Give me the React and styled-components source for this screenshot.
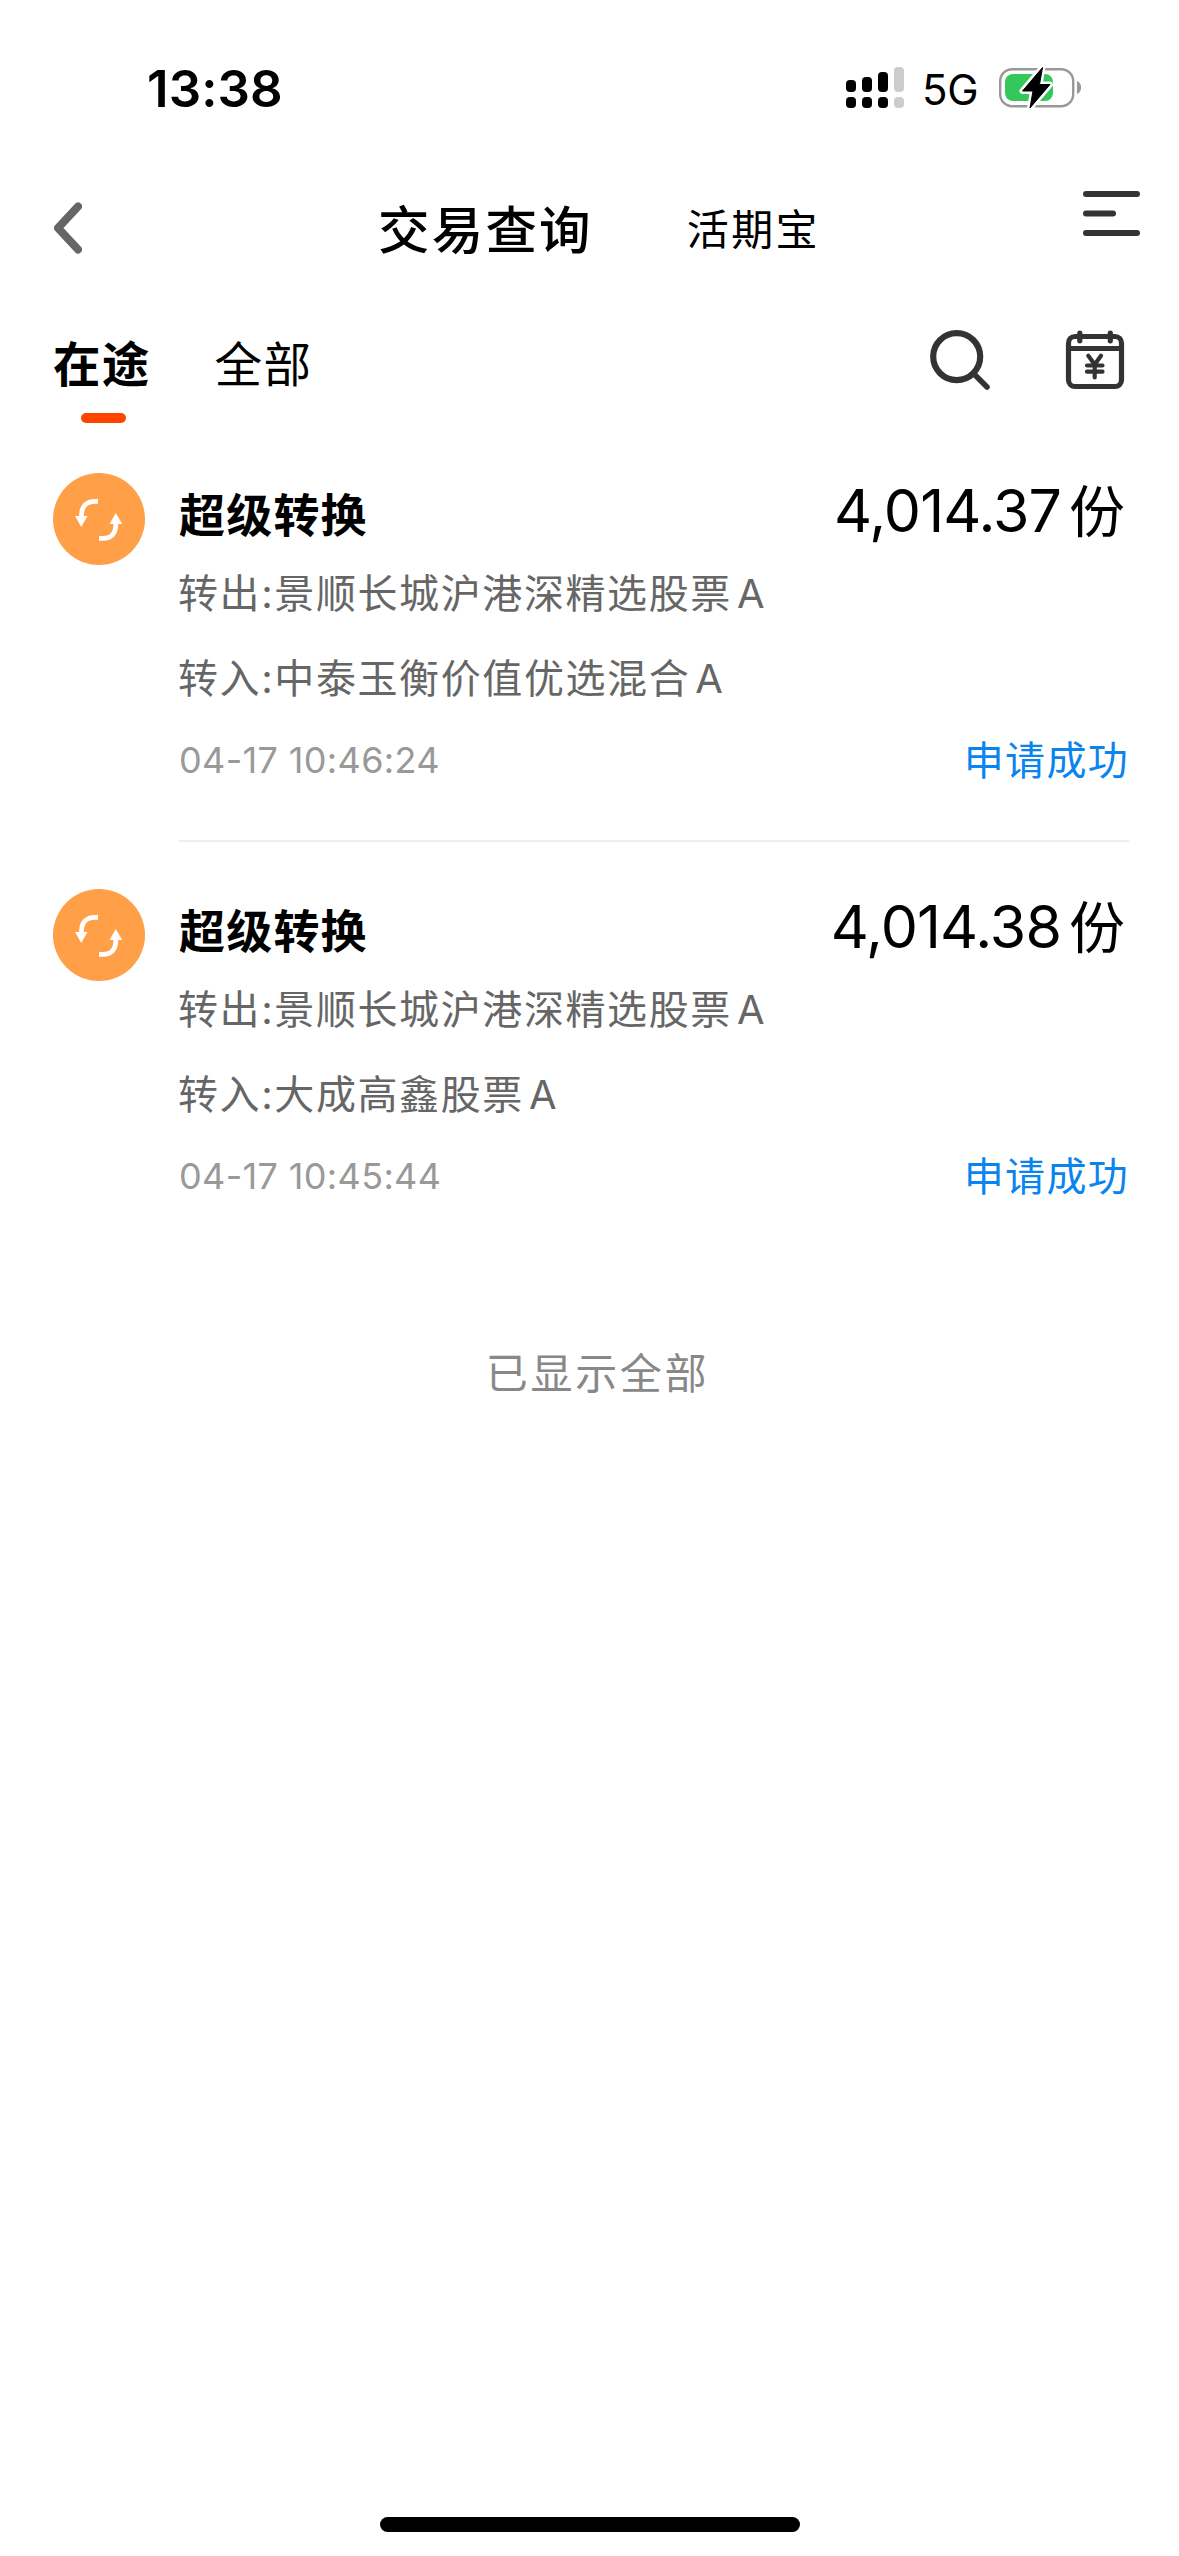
import React from "react";
import styled, { createGlobalStyle } from "styled-components";

const GlobalStyle = createGlobalStyle`
  *, *::before, *::after { box-sizing: border-box; }
  html, body { margin: 0; padding: 0; background: #fff; }
  body { font-family: Inter, "Noto Sans CJK SC", sans-serif; color: #000; }
  button { margin: 0; padding: 0; border: 0; background: none; font: inherit; color: inherit; }
  h1, p { margin: 0; font: inherit; }
  svg { display: block; flex: none; }
`;

const Screen = styled.div`
  width: 1179px;
  height: 2556px;
  display: flex;
  flex-direction: column;
  background: #fff;
  overflow: hidden;
  white-space: nowrap;
`;

const StatusBar = styled.header`
  height: 176px;
  padding: 0 98px 0 147px;
  display: flex;
  align-items: center;
  justify-content: space-between;
`;

const Clock = styled.time`
  padding-top: 1px;
  font-size: 51px;
  font-weight: 600;
  line-height: 60px;
  letter-spacing: 0.1px;
`;

const Indicators = styled.div`
  display: flex;
  align-items: center;
`;

const Network = styled.span`
  margin: 3px 20px 0 18px;
  width: 57px;
  font-size: 42px;
  line-height: 50px;
  letter-spacing: -0.4px;
`;

const NavBar = styled.nav`
  height: 104px;
  padding: 0 39px 0 54px;
  display: flex;
  align-items: center;
`;

const NavButton = styled.button`
  display: flex;
  align-self: ${(p) => p.$align || "center"};
  margin-top: ${(p) => p.$top || 0}px;
  margin-left: ${(p) => (p.$end ? "auto" : 0)};
`;

const Title = styled.h1`
  margin-left: 296px;
  padding-top: 3px;
  font-size: 51.5px;
  font-weight: 500;
  line-height: 60px;
  letter-spacing: 2.2px;
`;

const SideTitle = styled.button`
  margin-left: 94px;
  padding-top: 3px;
  font-size: 42px;
  line-height: 60px;
  letter-spacing: 2.4px;
`;

const TabBar = styled.div`
  height: 146px;
  padding: 49px 54px 0 53px;
  display: flex;
  align-items: flex-start;
`;

const Tab = styled.button`
  margin: 6px 64px 0 0;
  display: flex;
  flex-direction: column;
  align-items: center;
  gap: 18px;
  font-size: 47.5px;
  font-weight: ${(p) => (p.$active ? 700 : 400)};
  line-height: 60px;
  letter-spacing: 1.3px;

  &::after {
    content: "";
    width: 45px;
    height: 10px;
    margin-left: 3px;
    border-radius: 5px;
    background: ${(p) => (p.$active ? "#ff4400" : "transparent")};
  }
`;

const Tools = styled.div`
  margin-left: auto;
  display: flex;
  gap: 74px;
`;

const Record = styled.article`
  height: 416px;
  margin: 0 50px 0 53px;
  padding-top: 47px;
  display: flex;
  gap: 34px;
`;

const Badge = styled.span`
  width: 92px;
  height: 92px;
  flex: none;
  border-radius: 50%;
  background: #ff9f47;
`;

const Details = styled.div`
  flex: 1;
  height: 369px;
  border-bottom: 2px solid ${(p) => (p.$last ? "transparent" : "#eeeeee")};
`;

const Line = styled.div`
  height: ${(p) => p.$height}px;
  display: flex;
  align-items: center;
  justify-content: space-between;
`;

const Kind = styled.p`
  padding-top: 1px;
  font-size: 46px;
  font-weight: 700;
  line-height: 60px;
  letter-spacing: 1.2px;
`;

const Amount = styled.p`
  margin-top: -7px;
  padding-right: 4px;
  display: flex;
  align-items: center;
  gap: 8px;
  font-size: 59px;
  line-height: 70px;
  letter-spacing: -0.9px;
`;

const Unit = styled.span`
  padding-top: 2px;
  font-size: 56px;
  letter-spacing: 0;
`;

const Fund = styled.p`
  margin-left: -1px;
  padding-top: 2px;
  font-size: 40px;
  line-height: 60px;
  letter-spacing: 1.6px;
  color: #666;
`;

const ShareClass = styled.span`
  margin-left: 5px;
`;

const Stamp = styled.time`
  padding-top: 1px;
  font-size: 36px;
  line-height: 50px;
  letter-spacing: 0.35px;
  color: #999;
`;

const Status = styled.p`
  padding-top: 3px;
  font-size: 40px;
  line-height: 50px;
  letter-spacing: 1.3px;
  color: #0a84f0;
`;

const EndNote = styled.p`
  margin-top: 86px;
  padding-left: 16px;
  text-align: center;
  font-size: 42px;
  line-height: 60px;
  letter-spacing: 2.7px;
  color: #888;
`;

const HomeIndicator = styled.div`
  width: 420px;
  height: 15px;
  margin: auto auto 24px 380px;
  border-radius: 8px;
  background: #000;
`;

const SIGNAL = [80, 77, 72, 67];

const SignalIcon = () => (
  <svg width="58" height="42" viewBox="846 67 58 42">
    {SIGNAL.map((top, i) => (
      <g key={top} fill={i < 3 ? "#000" : "#ccc"}>
        <rect x={846 + i * 16} y={top} width="10" height={92 - top} rx="4" />
        <rect x={846 + i * 16} y="97" width="10" height="11" rx="4" />
      </g>
    ))}
  </svg>
);

const BOLT = "M1042.5 67.5L1022.5 91H1033L1030 108L1050 84.5H1039.5Z";

const BatteryIcon = () => (
  <svg width="82" height="42" viewBox="999 67 82 42">
    <rect x="1000.2" y="69.2" width="73" height="37" rx="12" fill="none" stroke="#999" strokeWidth="2.4" />
    <rect x="1005" y="74" width="48" height="27" rx="8" fill="#34c759" />
    <path d="M1077 81C1082.500 83 1082.500 92 1077 94Z" fill="#999" />
    <path d={BOLT} fill="#fff" stroke="#fff" strokeWidth="6" strokeLinejoin="round" />
    <path d={BOLT} fill="#000" stroke="#000" strokeWidth="1" strokeLinejoin="round" />
  </svg>
);

const BackIcon = () => (
  <svg width="28" height="52" viewBox="0 0 28 52" fill="none" stroke="#666" strokeWidth="8" strokeLinecap="round" strokeLinejoin="round">
    <path d="M24 4.500L4 26L24 47.500" />
  </svg>
);

const MenuIcon = () => (
  <svg width="57" height="46" viewBox="0 0 57 46" stroke="#333" strokeWidth="6" strokeLinecap="round">
    <path d="M3 4H54M3 23.500H30M3 43H54" />
  </svg>
);

const SearchIcon = () => (
  <svg width="62" height="62" viewBox="929 329 62 62" fill="none" stroke="#333" strokeLinecap="round">
    <circle cx="956.7" cy="356.600" r="23.500" strokeWidth="6.200" />
    <path d="M974.500 374.500L987 387" strokeWidth="5.600" />
  </svg>
);

const CalendarIcon = () => (
  <svg width="60" height="62" viewBox="1065 329 60 62" fill="none" stroke="#333" strokeWidth="5.200">
    <rect x="1068.500" y="336.500" width="53" height="50" rx="6.500" />
    <path d="M1068 348.500H1122" />
    <path d="M1079.800 333V340.800M1110.300 333V340.800" strokeLinecap="round" />
    <path
      d="M1088.300 355.800L1094.700 364.500L1101 355.800M1094.700 364.500V377.500M1087 365.500H1102.500M1087 371.700H1102.500"
      strokeWidth="4.200"
      strokeLinecap="round"
      strokeLinejoin="round"
    />
  </svg>
);

const SwapIcon = () => (
  <svg width="92" height="92" viewBox="0 0 92 92" fill="none" stroke="#fff" strokeWidth="4.800">
    <path d="M45 28.300H42C33.500 28.300 28.500 33.500 28.500 42V45" />
    <path d="M46 65.400H50C58.500 65.400 62.800 60 62.800 51.500V49" />
    <path d="M22 43H34.500L28.300 54Z" fill="#fff" stroke="none" />
    <path d="M56.500 51H69.200L62.800 40Z" fill="#fff" stroke="none" />
  </svg>
);

const RECORDS = [
  {
    kind: "超级转换",
    amount: "4,014.37",
    from: "转出:景顺长城沪港深精选股票",
    to: "转入:中泰玉衡价值优选混合",
    time: "04-17 10:46:24",
    status: "申请成功",
  },
  {
    kind: "超级转换",
    amount: "4,014.38",
    from: "转出:景顺长城沪港深精选股票",
    to: "转入:大成高鑫股票",
    time: "04-17 10:45:44",
    status: "申请成功",
  },
];

export default function App() {
  return (
    <>
      <GlobalStyle />
      <Screen>
        <StatusBar>
          <Clock>13:38</Clock>
          <Indicators>
            <SignalIcon />
            <Network>5G</Network>
            <BatteryIcon />
          </Indicators>
        </StatusBar>
        <NavBar>
          <NavButton aria-label="返回"><BackIcon /></NavButton>
          <Title>交易查询</Title>
          <SideTitle>活期宝</SideTitle>
          <NavButton $end $align="flex-start" $top={14} aria-label="菜单"><MenuIcon /></NavButton>
        </NavBar>
        <TabBar>
          <Tab $active>在途</Tab>
          <Tab>全部</Tab>
          <Tools>
            <SearchIcon />
            <CalendarIcon />
          </Tools>
        </TabBar>
        <main>
          {RECORDS.map((r, i) => (
            <Record key={r.time}>
              <Badge><SwapIcon /></Badge>
              <Details $last={i === RECORDS.length - 1}>
                <Line $height={82}>
                  <Kind>{r.kind}</Kind>
                  <Amount>{r.amount}<Unit>份</Unit></Amount>
                </Line>
                <Line $height={76}>
                  <Fund>{r.from}<ShareClass>A</ShareClass></Fund>
                </Line>
                <Line $height={94}>
                  <Fund>{r.to}<ShareClass>A</ShareClass></Fund>
                </Line>
                <Line $height={68}>
                  <Stamp>{r.time}</Stamp>
                  <Status>{r.status}</Status>
                </Line>
              </Details>
            </Record>
          ))}
          <EndNote>已显示全部</EndNote>
        </main>
        <HomeIndicator />
      </Screen>
    </>
  );
}
